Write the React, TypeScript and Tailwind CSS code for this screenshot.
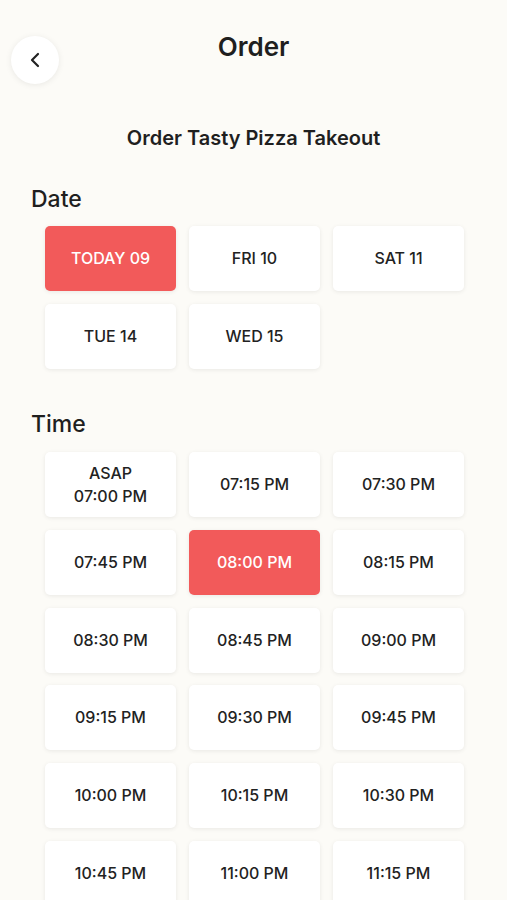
import { ChevronLeft } from "lucide-react";

const dates = ["TODAY 09", "FRI 10", "SAT 11", "TUE 14", "WED 15"];
const times = [
  "ASAP\n07:00 PM",
  "07:15 PM",
  "07:30 PM",
  "07:45 PM",
  "08:00 PM",
  "08:15 PM",
  "08:30 PM",
  "08:45 PM",
  "09:00 PM",
  "09:15 PM",
  "09:30 PM",
  "09:45 PM",
  "10:00 PM",
  "10:15 PM",
  "10:30 PM",
  "10:45 PM",
  "11:00 PM",
  "11:15 PM",
];

function Slot({ label, active }: { label: string; active?: boolean }) {
  return (
    <button
      className={
        active
          ? "h-[65px] rounded-[5px] bg-[#f25a5a] text-white text-[16px] font-medium leading-[23px] whitespace-pre-line shadow-[0_1px_4px_rgba(0,0,0,0.08)]"
          : "h-[65px] rounded-[5px] bg-white text-[#222] text-[16px] font-medium leading-[23px] whitespace-pre-line shadow-[0_1px_4px_rgba(0,0,0,0.08)]"
      }
    >
      {label}
    </button>
  );
}

export default function App() {
  return (
    <div
      className="h-[900px] overflow-hidden bg-[#fcfbf7] text-[#1f1f1f]"
      style={{ fontFamily: "Inter, 'Noto Sans', sans-serif" }}
    >
      {/* Header */}
      <div className="grid grid-cols-[1fr_auto_1fr] items-start">
        <div className="pl-[11px] pt-[36px]">
          <div className="w-[48px] h-[48px] rounded-full bg-white shadow-[0_1px_6px_rgba(0,0,0,0.08)] flex items-center justify-center">
            <ChevronLeft size={24} strokeWidth={2.2} className="text-[#222]" />
          </div>
        </div>
        <h1 className="pt-[30px] text-[26px] leading-[34px] font-semibold">Order</h1>
        <div />
      </div>

      <h2 className="mt-[40px] text-center text-[20px] leading-[28px] font-semibold">
        Order Tasty Pizza Takeout
      </h2>

      {/* Date */}
      <h3 className="mt-[32px] pl-[31px] text-[23px] leading-[30px] font-medium">Date</h3>
      <div className="mt-[12px] ml-[45px] grid grid-cols-[131px_131px_131px] gap-[13px]">
        {dates.map((d, i) => (
          <Slot key={d} label={d} active={i === 0} />
        ))}
      </div>

      {/* Time */}
      <h3 className="mt-[40px] pl-[31px] text-[23px] leading-[30px] font-medium">Time</h3>
      <div className="mt-[13px] ml-[45px] grid grid-cols-[131px_131px_131px] gap-x-[13px] gap-y-[12.8px]">
        {times.map((t) => (
          <Slot key={t} label={t} active={t === "08:00 PM"} />
        ))}
      </div>
    </div>
  );
}
